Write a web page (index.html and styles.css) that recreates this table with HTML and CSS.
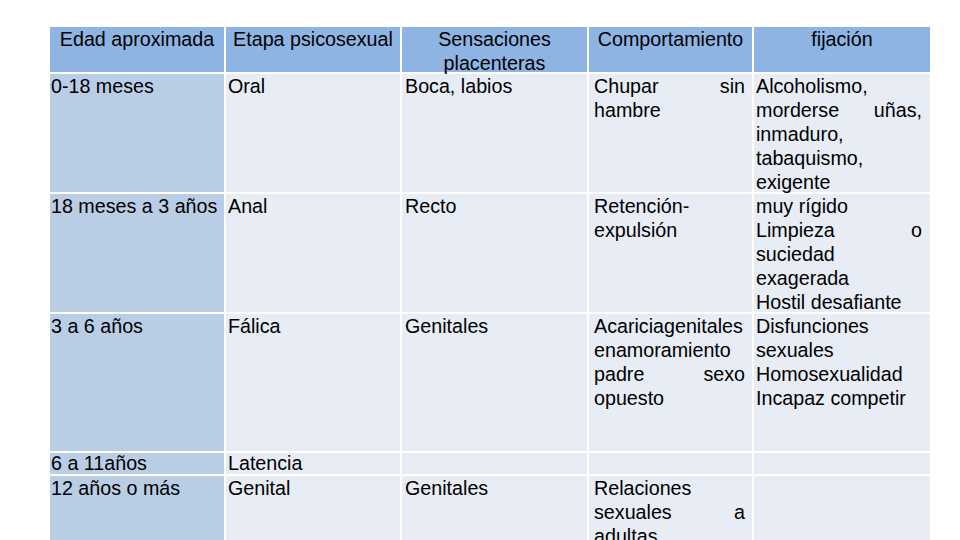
FILE: index.html
```html
<!DOCTYPE html>
<html lang="es">
<head>
<meta charset="utf-8">
<title>Etapas psicosexuales</title>
<link rel="stylesheet" href="styles.css">
</head>
<body>
<div class="table">
  <div class="cell head c1">Edad aproximada</div>
  <div class="cell head c2">Etapa psicosexual</div>
  <div class="cell head c3">Sensaciones placenteras</div>
  <div class="cell head c4">Comportamiento</div>
  <div class="cell head c5">fijación</div>

  <div class="cell first c1">0-18 meses</div>
  <div class="cell body c2">Oral</div>
  <div class="cell body c3">Boca, labios</div>
  <div class="cell body c4">Chupar sin hambre</div>
  <div class="cell body c5">Alcoholismo, morderse uñas, inmaduro, tabaquismo, exigente</div>

  <div class="cell first c1">18 meses a 3 años</div>
  <div class="cell body c2">Anal</div>
  <div class="cell body c3">Recto</div>
  <div class="cell body c4">Retención-expulsión</div>
  <div class="cell body c5">muy rígido<br>Limpieza o suciedad exagerada<br>Hostil desafiante</div>

  <div class="cell first c1">3 a 6 años</div>
  <div class="cell body c2">Fálica</div>
  <div class="cell body c3">Genitales</div>
  <div class="cell body c4">Acariciagenitales enamoramiento padre sexo opuesto</div>
  <div class="cell body c5">Disfunciones sexuales Homosexualidad Incapaz competir</div>

  <div class="cell first c1 short">6 a 11años</div>
  <div class="cell body c2 short">Latencia</div>
  <div class="cell body c3 short"></div>
  <div class="cell body c4 short"></div>
  <div class="cell body c5 short"></div>

  <div class="cell first c1">12 años o más</div>
  <div class="cell body c2">Genital</div>
  <div class="cell body c3">Genitales</div>
  <div class="cell body c4">Relaciones sexuales a adultas</div>
  <div class="cell body c5"></div>
</div>
</body>
</html>
```
FILE: styles.css
```css
html, body {
  margin: 0;
  padding: 0;
  background: #ffffff;
  width: 960px;
  height: 540px;
  overflow: hidden;
}

.table {
  margin: 27px 0 0 50px;
  width: 880px;
  display: grid;
  grid-template-columns: 174px 174px 185px 163px 176px;
  grid-template-rows: 45px 118px 118px 137px 21px 80px;
  column-gap: 2px;
  row-gap: 2px;
  font-family: "Liberation Sans", Arial, sans-serif;
  font-size: 19.7px;
  line-height: 24px;
  color: #000000;
}

.cell {
  overflow: visible;
  text-align: justify;
  word-break: normal;
}

.head {
  background: #8eb4e3;
  text-align: center;
  padding: 0 2px;
}

.first {
  background: #b9cde5;
}

.body {
  background: #e7ecf5;
}

.short {
  line-height: 21px;
}

.first.c1 { padding: 0 2px 0 1px; }
.body.c2 { padding: 0 4px 0 2px; }
.body.c3 { padding: 0 4px 0 3px; }
.body.c4 { padding: 0 7px 0 5px; }
.body.c5 { padding: 0 8px 0 2px; }
```
